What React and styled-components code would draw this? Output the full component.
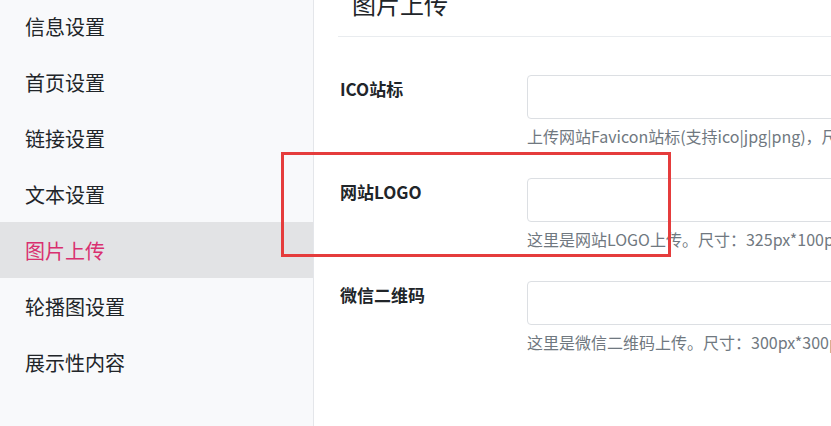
import React from "react";
import styled, { createGlobalStyle } from "styled-components";

const GlobalStyle = createGlobalStyle`
   html, body {
      margin: 0;
      padding: 0;
      background: #fff;
      overflow: hidden;
   }
   body {
      font-family: "Noto Sans CJK SC", "Noto Sans", "Liberation Sans", sans-serif;
      color: #212529;
   }
`;

const Layout = styled.div`
   position: relative;
   display: flex;
   width: 831px;
   height: 426px;
   overflow: hidden;
`;

const Sidebar = styled.nav`
   flex: 0 0 313px;
   background: #f8f9fb;
   border-right: 1px solid #e4e6ea;
`;

const MenuList = styled.ul`
   list-style: none;
   margin: -2px 0 0;
   padding: 0;
`;

const MenuItem = styled.li`
   display: flex;
   align-items: center;
   height: 56px;
   padding-left: 25px;
   font-size: 20px;
   color: ${(p) => (p.$active ? "#d9306f" : "#212529")};
   background: ${(p) => (p.$active ? "#e2e3e5" : "transparent")};
   cursor: pointer;
`;

const Main = styled.main`
   flex: 1;
   min-width: 0;
   padding: 0 0 0 24px;
   margin-top: -16px;
`;

const Header = styled.div`
   box-sizing: border-box;
   width: 700px;
   height: 53px;
   border-bottom: 1px solid #e9ecef;
   padding: 2px 0 0 14px;
`;

const Title = styled.h2`
   margin: 0;
   font-size: 24px;
   font-weight: 400;
   line-height: 36px;
`;

const Form = styled.form`
   display: flex;
   flex-direction: column;
   gap: 30px;
   padding-top: 38px;
   padding-left: 2px;
`;

const Row = styled.div`
   display: grid;
   grid-template-columns: 187px 560px;
`;

const Label = styled.label`
   font-size: 17px;
   font-weight: 700;
   line-height: 24px;
   padding-top: 2px;
`;

const Field = styled.div`
   display: flex;
   flex-direction: column;
   gap: 5px;
`;

const Input = styled.input`
   box-sizing: border-box;
   height: 44px;
   width: 100%;
   border: 1px solid #dcdfe3;
   border-radius: 4px;
   background: #fff;
   font: inherit;
`;

const Help = styled.div`
   font-size: 16px;
   line-height: 24px;
   color: #707880;
   white-space: nowrap;
`;

const Highlight = styled.div`
   position: absolute;
   left: 281px;
   top: 152px;
   width: 390px;
   height: 105px;
   box-sizing: border-box;
   border: 3px solid #e53c3c;
   pointer-events: none;
`;

const menu = ["信息设置", "首页设置", "链接设置", "文本设置", "图片上传", "轮播图设置", "展示性内容"];

const fields = [
   { label: "ICO站标", help: "上传网站Favicon站标(支持ico|jpg|png)，尺寸：32px*32px" },
   { label: "网站LOGO", help: "这里是网站LOGO上传。尺寸：325px*100px" },
   { label: "微信二维码", help: "这里是微信二维码上传。尺寸：300px*300px" },
];

const App = () => {
   return (
      <>
         <GlobalStyle />
         <Layout>
            <Sidebar>
               <MenuList>
                  {menu.map((m) => (
                     <MenuItem key={m} $active={m === "图片上传"}>
                        {m}
                     </MenuItem>
                  ))}
               </MenuList>
            </Sidebar>
            <Main>
               <Header>
                  <Title>图片上传</Title>
               </Header>
               <Form>
                  {fields.map((f) => (
                     <Row key={f.label}>
                        <Label>{f.label}</Label>
                        <Field>
                           <Input type="text" />
                           <Help>{f.help}</Help>
                        </Field>
                     </Row>
                  ))}
               </Form>
            </Main>
            <Highlight />
         </Layout>
      </>
   );
};

export default App;
